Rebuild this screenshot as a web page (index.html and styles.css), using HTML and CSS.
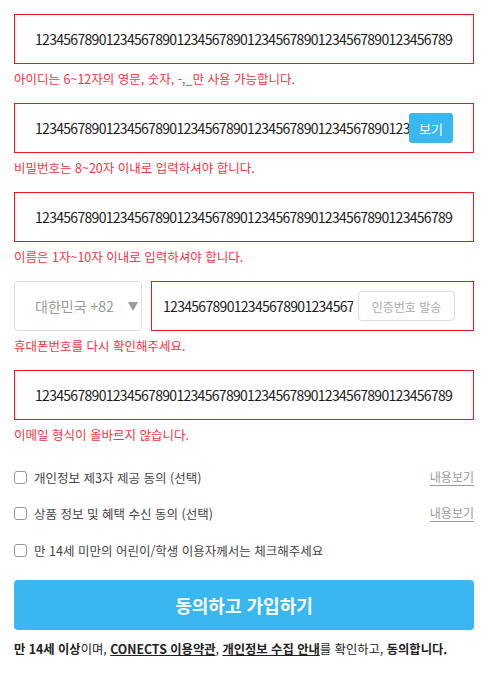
FILE: index.html
```html
<!DOCTYPE html>
<html lang="ko">
<head>
<meta charset="utf-8">
<title>회원가입</title>
<link rel="stylesheet" href="styles.css">
</head>
<body>
<form class="signup">
  <div class="field">
    <input class="input is-error" type="text" value="123456789012345678901234567890123456789012345678901234567890123456789012345678901234567890">
  </div>
  <p class="error">아이디는 6~12자의 영문, 숫자, -,_만 사용 가능합니다.</p>

  <div class="field">
    <input class="input is-error" type="text" value="123456789012345678901234567890123456789012345678901234567890123456789012345678901234567890">
    <button type="button" class="btn-show">보기</button>
  </div>
  <p class="error">비밀번호는 8~20자 이내로 입력하셔야 합니다.</p>

  <div class="field">
    <input class="input is-error" type="text" value="123456789012345678901234567890123456789012345678901234567890123456789012345678901234567890">
  </div>
  <p class="error">이름은 1자~10자 이내로 입력하셔야 합니다.</p>

  <div class="phone-row">
    <div class="country">
      <span class="country-label">대한민국 +82</span>
      <span class="country-arrow"></span>
    </div>
    <div class="field phone-field">
      <input class="input input-phone is-error" type="text" value="123456789012345678901234567890123456789012345678901234567890">
      <button type="button" class="btn-code">인증번호 발송</button>
    </div>
  </div>
  <p class="error">휴대폰번호를 다시 확인해주세요.</p>

  <div class="field">
    <input class="input is-error" type="text" value="123456789012345678901234567890123456789012345678901234567890123456789012345678901234567890">
  </div>
  <p class="error">이메일 형식이 올바르지 않습니다.</p>

  <div class="agree">
    <label class="agree-row">
      <span class="check"></span>
      <span class="agree-text">개인정보 제3자 제공 동의 (선택)</span>
      <a class="view-link">내용보기</a>
    </label>
    <label class="agree-row">
      <span class="check"></span>
      <span class="agree-text">상품 정보 및 혜택 수신 동의 (선택)</span>
      <a class="view-link">내용보기</a>
    </label>
    <label class="agree-row agree-child">
      <span class="check"></span>
      <span class="agree-text">만 14세 미만의 어린이/학생 이용자께서는 체크해주세요</span>
    </label>
  </div>

  <button type="button" class="btn-submit">동의하고 가입하기</button>

  <p class="notice"><b>만 14세 이상</b>이며, <b class="u">CONECTS 이용약관</b>, <b class="u">개인정보 수집 안내</b>를 확인하고, <b>동의합니다.</b></p>
</form>
</body>
</html>
```

FILE: styles.css
```css
* {
  box-sizing: border-box;
}

body {
  margin: 0;
  background: #fff;
  font-family: "Noto Sans CJK KR", "Noto Sans", sans-serif;
  color: #222;
}

.signup {
  padding: 14px 12px 0 14px;
}

.field {
  position: relative;
}

.input {
  display: block;
  width: 100%;
  height: 50px;
  margin: 0;
  padding: 0 20px;
  border: 1px solid #ddd;
  border-radius: 0;
  background: #fff;
  font-family: "Noto Sans CJK KR", "Noto Sans", sans-serif;
  font-size: 14px;
  letter-spacing: -0.7px;
  color: #1a1a1a;
  outline: none;
}

.input.is-error {
  border-color: #f0141e;
}

.error {
  margin: 5px 0 14px;
  font-size: 12.5px;
  line-height: 20px;
  color: #f5333f;
}

.btn-show {
  position: absolute;
  top: 10px;
  right: 21px;
  width: 44px;
  height: 30px;
  padding: 0;
  border: 0;
  border-radius: 3px;
  background: #38b7f1;
  color: #fff;
  font-family: inherit;
  font-size: 13px;
}

.phone-row {
  display: flex;
  gap: 9px;
}

.country {
  flex: 0 0 128px;
  height: 50px;
  display: flex;
  align-items: center;
  padding: 0 3px 0 20px;
  border: 1px solid #ddd;
  border-radius: 4px;
  color: #999;
  font-size: 14px;
}

.country-label {
  flex: 1;
}

.country-arrow {
  width: 0;
  height: 0;
  border-left: 5px solid transparent;
  border-right: 5px solid transparent;
  border-top: 9px solid #999;
}

.phone-field {
  flex: 1;
}

.input-phone {
  padding: 0 120px 0 11px;
}

.btn-code {
  position: absolute;
  top: 10px;
  right: 19px;
  width: 97px;
  height: 30px;
  padding: 0;
  border: 1px solid #ddd;
  border-radius: 4px;
  background: #fff;
  color: #aaa;
  font-family: inherit;
  font-size: 12px;
}

.agree {
  display: flex;
  flex-direction: column;
}

.agree-row {
  display: flex;
  align-items: center;
  height: 36px;
  font-size: 12.5px;
  color: #444;
}

.agree-child {
  margin-top: 1px;
}

.check {
  flex: 0 0 13px;
  width: 13px;
  height: 13px;
  margin-right: 7px;
  border: 1px solid #999;
  border-radius: 3px;
}

.agree-text {
  flex: 1;
}

.view-link {
  font-size: 12px;
  line-height: 16px;
  color: #999;
  border-bottom: 1px solid #999;
}

.btn-submit {
  display: block;
  width: 100%;
  height: 50px;
  margin-top: 12px;
  border: 0;
  border-radius: 4px;
  background: #38b7f1;
  color: #fff;
  font-family: inherit;
  font-size: 18px;
  font-weight: 700;
}

.notice {
  margin: 9px 0 0;
  font-size: 12.3px;
  line-height: 20px;
  color: #222;
}

.notice b {
  font-weight: 700;
}

.notice .u {
  text-decoration: underline;
}
```
